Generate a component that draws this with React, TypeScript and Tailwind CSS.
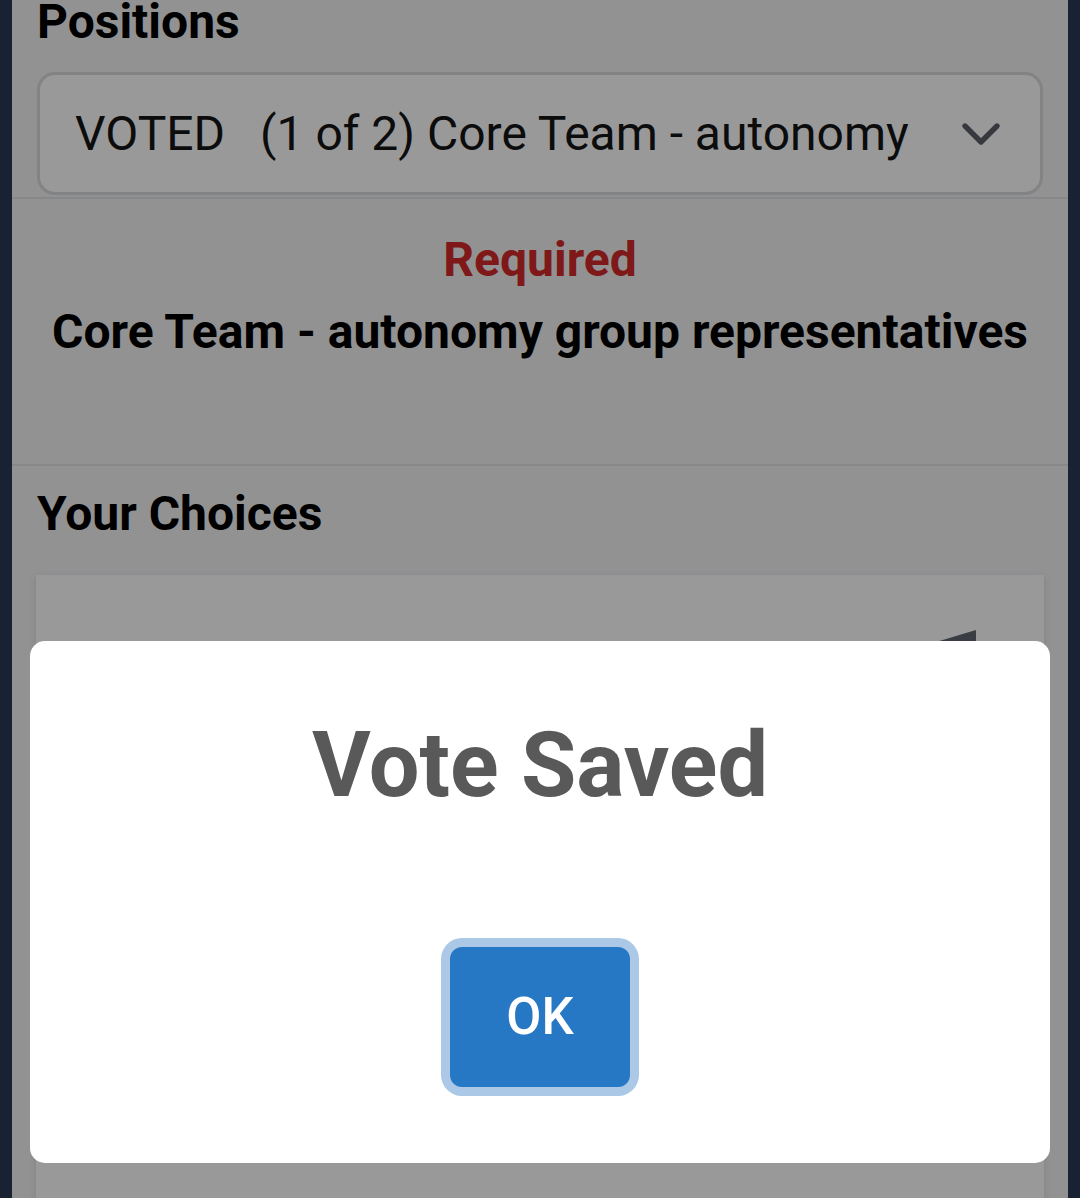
import { ChevronDown } from "lucide-react";

const font = "font-['Roboto','Liberation_Sans',sans-serif]";

function PositionSelect() {
  return (
    <div className="mt-[28px] flex h-[123px] items-center justify-between rounded-[18px] border-[3px] border-[#d9dadd] bg-white pr-[27px] pl-[35px]">
      <span className="text-[48px] leading-none text-[#141414]">
        <span className="mr-[35px]">VOTED</span>
        (1 of 2) Core Team - autonomy
      </span>
      <ChevronDown size={64} strokeWidth={2} className="text-[#5c6068]" />
    </div>
  );
}

function VoteSavedModal() {
  return (
    <div className="absolute inset-0 flex flex-col items-center bg-black/40 pt-[641px]">
      <div className="flex w-[1020px] flex-col items-center rounded-[15px] bg-white pt-[72px] pb-[76px]">
        <h2 className="text-[90px] leading-[106px] font-bold text-[#595959]">
          Vote Saved
        </h2>
        <button
          type="button"
          className="mt-[128px] flex h-[140px] w-[180px] items-center justify-center rounded-[12px] bg-[#2778c4] text-[51px] font-medium text-white shadow-[0_0_0_9px_#abc9e7]"
        >
          OK
        </button>
      </div>
    </div>
  );
}

export default function App() {
  return (
    <div className={`relative h-[1198px] overflow-hidden bg-[#2b3955] px-3 ${font}`}>
      <div className="h-full bg-[#f3f3f6]">
        <div className="border-b-2 border-[#e2e3e6] px-[25px] pb-[2px]">
          <h1 className="text-[48px] leading-[44px] font-bold text-black">Positions</h1>
          <PositionSelect />
        </div>

        <div className="border-b-2 border-[#e2e3e6] pt-[25px] pb-[96px] text-center text-[48px] leading-[72px] font-bold">
          <p className="text-[#d42a2a]">Required</p>
          <p className="text-black">Core Team - autonomy group representatives</p>
        </div>

        <div className="px-[24px] pt-[12px]">
          <h2 className="px-[1px] text-[48px] leading-[72px] font-bold text-black">
            Your Choices
          </h2>
          <div className="mt-[25px] flex h-[700px] justify-end bg-white pt-[55px] pr-[68px] shadow-[0_2px_6px_rgba(0,0,0,0.12)]">
            <svg width="50" height="30" viewBox="0 0 50 30" className="text-[#626772]">
              <polygon points="50,0 50,30 0,15" fill="currentColor" />
            </svg>
          </div>
        </div>
      </div>

      <VoteSavedModal />
    </div>
  );
}
